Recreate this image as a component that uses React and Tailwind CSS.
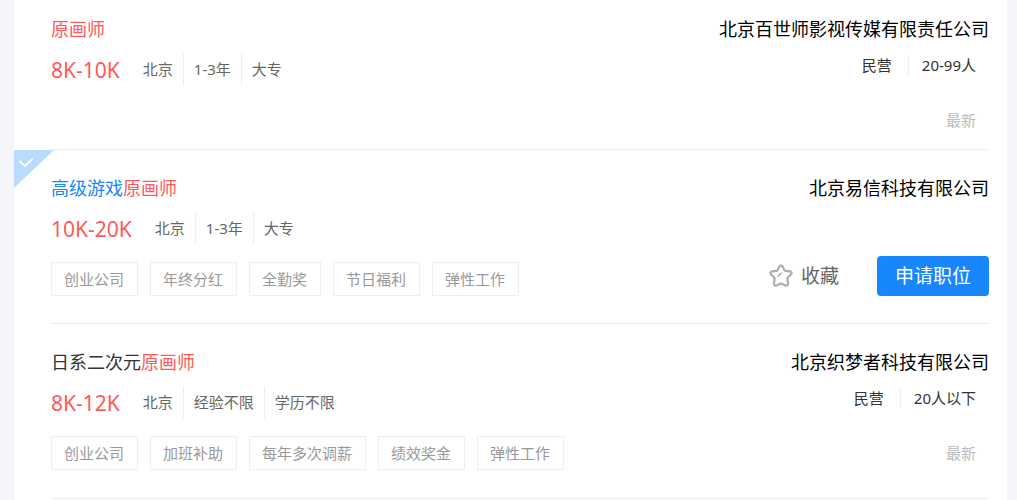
const jobs = [
  {
    id: 1,
    prefix: "",
    prefixColor: "",
    keyword: "原画师",
    salary: "8K-10K",
    meta: ["北京", "1-3年", "大专"],
    tags: [],
    company: "北京百世师影视传媒有限责任公司",
    info: ["民营", "20-99人"],
    spacing: "pt-[15px] pb-[19px]",
  },
  {
    id: 2,
    prefix: "高级游戏",
    prefixColor: "text-[#1787fb]",
    keyword: "原画师",
    salary: "10K-20K",
    meta: ["北京", "1-3年", "大专"],
    tags: ["创业公司", "年终分红", "全勤奖", "节日福利", "弹性工作"],
    company: "北京易信科技有限公司",
    active: true,
    spacing: "pt-6 pb-[27px]",
  },
  {
    id: 3,
    prefix: "日系二次元",
    prefixColor: "text-[#333333]",
    keyword: "原画师",
    salary: "8K-12K",
    meta: ["北京", "经验不限", "学历不限"],
    tags: ["创业公司", "加班补助", "每年多次调薪", "绩效奖金", "弹性工作"],
    company: "北京织梦者科技有限公司",
    info: ["民营", "20人以下"],
    spacing: "pt-6 pb-7",
  },
];

function StarIcon() {
  return (
    <svg
      aria-hidden="true"
      className="h-6 w-6"
      viewBox="0 0 24 24"
      fill="none"
      stroke="#adadad"
      strokeWidth="2.2"
      strokeLinecap="round"
      strokeLinejoin="round"
    >
      <path d="M10.3 2.6Q12 .2 13.7 2.6L15.2 5.9Q15.6 6.7 16.5 6.8L20.9 7.4Q23.7 8.3 21.9 10.4L18.9 13.5Q18.3 14.1 18.4 15L19 19.4Q19 22.4 16.3 21.4L12.9 19.8Q12 19.4 11.1 19.8L7.7 21.4Q5 22.4 5 19.4L5.6 15Q5.7 14.1 5.1 13.5L2.1 10.4Q.3 8.3 3.1 7.4L7.5 6.8Q8.4 6.7 8.8 5.9Z" />
      <path d="M9.3 12.2Q10 10 12.6 9.3" strokeWidth="1.6" />
    </svg>
  );
}

function SelectCorner({ name }) {
  return (
    <label className="absolute top-0 left-0 cursor-pointer">
      <input type="checkbox" className="sr-only" aria-label={name} />
      <svg aria-hidden="true" className="h-[38px] w-10" viewBox="0 0 40 38">
        <path d="M0 0H40L0 38Z" fill="#b9dcfe" />
        <path
          d="M6 11.5L11 16L18 9.3"
          fill="none"
          stroke="#fff"
          strokeWidth="1.8"
          strokeLinecap="round"
          strokeLinejoin="round"
        />
      </svg>
    </label>
  );
}

function JobRow({ job }) {
  return (
    <li className="relative pr-[18px] pl-[37px]">
      {job.active && <SelectCorner name={job.prefix + job.keyword} />}
      <div className={`flex justify-between border-b border-[#eeeeee] ${job.spacing}`}>
        <div>
          <h2 className="text-lg leading-7">
            <a href="#job" className="text-[#ff5959]">
              {job.prefix && <span className={job.prefixColor}>{job.prefix}</span>}
              {job.keyword}
            </a>
          </h2>
          <div className="mt-[10px] flex h-[33px] items-center">
            <span className="mr-[13px] text-[21px] leading-7 text-[#ff5959]">{job.salary}</span>
            <ul className="flex h-full divide-x divide-[#eeeeee] text-[15px] text-[#666666]">
              {job.meta.map((m) => (
                <li key={m} className="flex items-center px-[10px]">
                  {m}
                </li>
              ))}
            </ul>
          </div>
          {job.tags.length > 0 && (
            <ul className="mt-[17px] flex gap-3 text-[15px] text-[#999999]">
              {job.tags.map((t) => (
                <li
                  key={t}
                  className="flex h-[34px] items-center border border-[#eeeeee] pr-[13px] pl-3"
                >
                  {t}
                </li>
              ))}
            </ul>
          )}
        </div>

        <div className="flex flex-col items-end">
          <a href="#company" className="text-lg leading-7 text-black">
            {job.company}
          </a>
          {job.info && (
            <div className="mt-3 mr-[13px] flex h-5 items-center text-[15px] leading-5 text-[#333333]">
              <span className="pr-4">{job.info[0]}</span>
              <span className="border-l border-[#eeeeee] pl-[13px]">{job.info[1]}</span>
            </div>
          )}
          {job.active ? (
            <div className="mt-[54px] flex h-10 items-center gap-[38px] text-[19px]">
              <button type="button" className="flex cursor-pointer items-center gap-2 text-[#666666]">
                <StarIcon />
                收藏
              </button>
              <button
                type="button"
                className="h-10 cursor-pointer rounded bg-[#1787fb] px-[18px] text-white"
              >
                申请职位
              </button>
            </div>
          ) : (
            <span className="mt-[35px] mr-[13px] text-[15px] leading-5 text-[#bbbbbb]">最新</span>
          )}
        </div>
      </div>
    </li>
  );
}

export default function App() {
  return (
    <div className="min-h-screen bg-[#f4f6fb] pr-[10px] pl-[14px] font-['Noto_Sans','Noto_Sans_CJK_SC',sans-serif]">
      <main className="min-h-screen bg-white">
        <ul>
          {jobs.map((job) => (
            <JobRow key={job.id} job={job} />
          ))}
        </ul>
      </main>
    </div>
  );
}
